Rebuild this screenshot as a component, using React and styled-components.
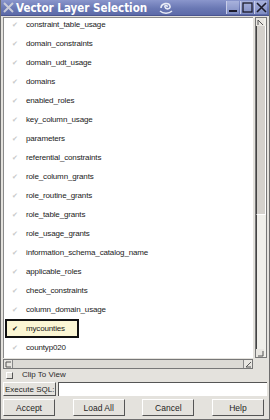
import styled, { createGlobalStyle } from "styled-components";

const Global = createGlobalStyle`
  html, body { margin: 0; padding: 0; background: #e4e2dd; }
  body { font-family: "Liberation Sans", Arial, sans-serif; }
`;

const tables = [
  "constraint_table_usage",
  "domain_constraints",
  "domain_udt_usage",
  "domains",
  "enabled_roles",
  "key_column_usage",
  "parameters",
  "referential_constraints",
  "role_column_grants",
  "role_routine_grants",
  "role_table_grants",
  "role_usage_grants",
  "information_schema_catalog_name",
  "applicable_roles",
  "check_constraints",
  "column_domain_usage",
  "mycounties",
  "countyp020",
];

const App = () => {
  return (
    <>
      <Global />
      <Window>
        <TitleBar>
          <svg width="11" height="11" viewBox="0 0 11 11">
            <path d="M1 1 L10 10 M10 1 L1 10" stroke="#c9cbd8" strokeWidth="2" />
          </svg>
          <Title>Vector Layer Selection</Title>
          <Swirl width="14" height="13" viewBox="0 0 14 13">
            <path
              d="M2 7 C2 2 10 1 11 5 C12 8 7 9 6 6 C5 4 9 4 8 6"
              fill="none"
              stroke="#e8ebf6"
              strokeWidth="1.6"
            />
            <path d="M1 10 C4 13 10 13 13 10" fill="none" stroke="#e8ebf6" strokeWidth="1.4" />
          </Swirl>
          <WinButtons>
            <WinButton>
              <svg width="11" height="11" viewBox="0 0 11 11">
                <rect x="1" y="8" width="8" height="2" fill="#1c1c2c" />
              </svg>
            </WinButton>
            <WinButton>
              <svg width="11" height="11" viewBox="0 0 11 11">
                <rect x="1" y="1" width="9" height="9" fill="none" stroke="#1c1c2c" strokeWidth="1.3" />
              </svg>
            </WinButton>
            <WinButton>
              <svg width="11" height="11" viewBox="0 0 11 11">
                <path d="M1 1 L10 10 M10 1 L1 10" stroke="#1c1c2c" strokeWidth="1.6" />
              </svg>
            </WinButton>
          </WinButtons>
        </TitleBar>

        <Body>
          <ListArea>
            <ListColumn>
              <List>
                <RowStack>
                  {tables.map((name) => (
                    <Row key={name} selected={name === "mycounties"}>
                      <Check selected={name === "mycounties"}>✔</Check>
                      <RowText>{name}</RowText>
                    </Row>
                  ))}
                </RowStack>
              </List>
              <HScroll>
                <ArrowBox>
                  <svg width="7" height="7" viewBox="0 0 7 7">
                    <path d="M6 1 L1 1 L1 6 L6 6" fill="none" stroke="#555" />
                  </svg>
                </ArrowBox>
                <HTrack />
                <ArrowBox>
                  <svg width="7" height="7" viewBox="0 0 7 7">
                    <path d="M1 6 L6 1 M1 6 L6 6" fill="none" stroke="#555" />
                  </svg>
                </ArrowBox>
              </HScroll>
            </ListColumn>
            <VScroll>
              <ArrowBox>
                <svg width="7" height="7" viewBox="0 0 7 7">
                  <path d="M1 6 L1 1 L6 6" fill="none" stroke="#555" />
                </svg>
              </ArrowBox>
              <VThumb />
              <VTrack />
              <ArrowBox>
                <svg width="7" height="7" viewBox="0 0 7 7">
                  <path d="M6 1 L6 6 L1 6" fill="none" stroke="#555" />
                </svg>
              </ArrowBox>
            </VScroll>
          </ListArea>

          <ClipRow>
            <CheckBox />
            <Label>Clip To View</Label>
          </ClipRow>

          <SqlRow>
            <SmallButton>Execute SQL:</SmallButton>
            <SqlInput />
          </SqlRow>

          <ButtonRow>
            <Button>Accept</Button>
            <Button>Load All</Button>
            <Button>Cancel</Button>
            <Button>Help</Button>
          </ButtonRow>
        </Body>
      </Window>
    </>
  );
};

const Window = styled.div`
  width: 270px;
  height: 420px;
  display: flex;
  flex-direction: column;
  background: #e4e2dd;
  box-sizing: border-box;
  border-left: 1px solid #6d6d6d;
  border-right: 1px solid #6d6d6d;
  border-bottom: 1px solid #6d6d6d;
  overflow: hidden;
`;

const TitleBar = styled.div`
  height: 16px;
  flex-shrink: 0;
  display: flex;
  align-items: center;
  padding: 0 2px 0 2px;
  box-sizing: border-box;
  background: linear-gradient(#8a96cc, #6a78b4 55%, #5c6aa8);
  border-bottom: 1px solid #4a5590;
`;

const Title = styled.span`
  margin-left: 2px;
  font-family: "DejaVu Sans Condensed", "DejaVu Sans", sans-serif;
  font-stretch: condensed;
  font-weight: 700;
  font-size: 11.5px;
  line-height: 14px;
  color: #ffffff;
  white-space: nowrap;
`;

const Swirl = styled.svg`
  margin-left: 12px;
`;

const WinButtons = styled.div`
  margin-left: auto;
  display: flex;
  gap: 1px;
`;

const WinButton = styled.div`
  width: 12px;
  height: 13px;
  display: flex;
  align-items: center;
  justify-content: center;
  background: linear-gradient(#a8b2dc, #7f8cc2);
  border-left: 1px solid #c8cde8;
`;

const Body = styled.div`
  flex: 1;
  display: flex;
  flex-direction: column;
  padding: 1px 2px 0 2px;
`;

const ListArea = styled.div`
  display: flex;
  height: 352px;
  flex-shrink: 0;
`;

const ListColumn = styled.div`
  flex: 1;
  display: flex;
  flex-direction: column;
`;

const List = styled.div`
  flex: 1;
  background: #ffffff;
  border-top: 1px solid #8a8a8a;
  border-left: 1px solid #8a8a8a;
  padding: 0 0 0 1px;
  overflow: hidden;
`;

const RowStack = styled.div`
  margin-top: -3px;
`;

const Row = styled.div`
  height: 15px;
  width: ${({ selected }) => (selected ? "70px" : "auto")};
  display: flex;
  align-items: center;
  background: ${({ selected }) => (selected ? "#fbf6d4" : "transparent")};
  border: 2px solid ${({ selected }) => (selected ? "#111111" : "transparent")};
`;

const Check = styled.span`
  width: 14px;
  padding-left: 5px;
  font-size: 7px;
  color: ${({ selected }) => (selected ? "#111111" : "#c9c9c9")};
`;

const RowText = styled.span`
  font-size: 8px;
  letter-spacing: -0.15px;
  color: #1a1a1a;
  white-space: nowrap;
`;

const HScroll = styled.div`
  height: 8px;
  display: flex;
  margin-top: 1px;
  border: 1px solid #777;
  background: #dcdad5;
`;

const HTrack = styled.div`
  flex: 1;
  border-left: 1px solid #888;
  border-right: 1px solid #888;
`;

const ArrowBox = styled.div`
  width: 8px;
  height: 8px;
  display: flex;
  align-items: center;
  justify-content: center;
  background: #e8e6e1;
`;

const VScroll = styled.div`
  width: 10px;
  display: flex;
  flex-direction: column;
  margin-left: 2px;
  margin-bottom: 11px;
  border: 1px solid #777;
  background: #f0efea;
`;

const VThumb = styled.div`
  height: 188px;
  background: #d4d1cc;
  border-left: 1px solid #444;
  border-right: 1px solid #fff;
  border-bottom: 1px solid #fff;
`;

const VTrack = styled.div`
  flex: 1;
  border-left: 1px solid #444;
`;

const ClipRow = styled.div`
  display: flex;
  align-items: center;
  height: 10px;
  margin-top: 1px;
  padding-left: 3px;
`;

const CheckBox = styled.div`
  width: 5px;
  height: 5px;
  border-left: 1px solid #fff;
  border-top: 1px solid #fff;
  border-right: 1px solid #555;
  border-bottom: 1px solid #555;
`;

const Label = styled.span`
  margin-left: 9px;
  font-size: 8px;
  line-height: 10px;
  color: #2a2a2a;
`;

const SqlRow = styled.div`
  display: flex;
  height: 14px;
  margin-top: 2px;
  gap: 2px;
`;

const SmallButton = styled.div`
  flex-shrink: 0;
  padding: 0 1px;
  display: flex;
  align-items: center;
  justify-content: center;
  font-size: 8px;
  white-space: nowrap;
  color: #1e1e1e;
  background: #e4e2dd;
  border-top: 1px solid #fff;
  border-left: 1px solid #fff;
  border-right: 1px solid #555;
  border-bottom: 1px solid #555;
`;

const SqlInput = styled.div`
  flex: 1;
  background: #ffffff;
  border-top: 1px solid #555;
  border-left: 1px solid #555;
`;

const ButtonRow = styled.div`
  display: flex;
  justify-content: space-between;
  margin-top: 3px;
  padding-right: 3px;
`;

const Button = styled.div`
  width: 50px;
  height: 15px;
  display: flex;
  align-items: center;
  justify-content: center;
  font-size: 8.5px;
  color: #1e1e1e;
  background: #e4e2dd;
  border-top: 1px solid #fff;
  border-left: 1px solid #fff;
  border-right: 1px solid #555;
  border-bottom: 1px solid #555;
`;

export default App;
